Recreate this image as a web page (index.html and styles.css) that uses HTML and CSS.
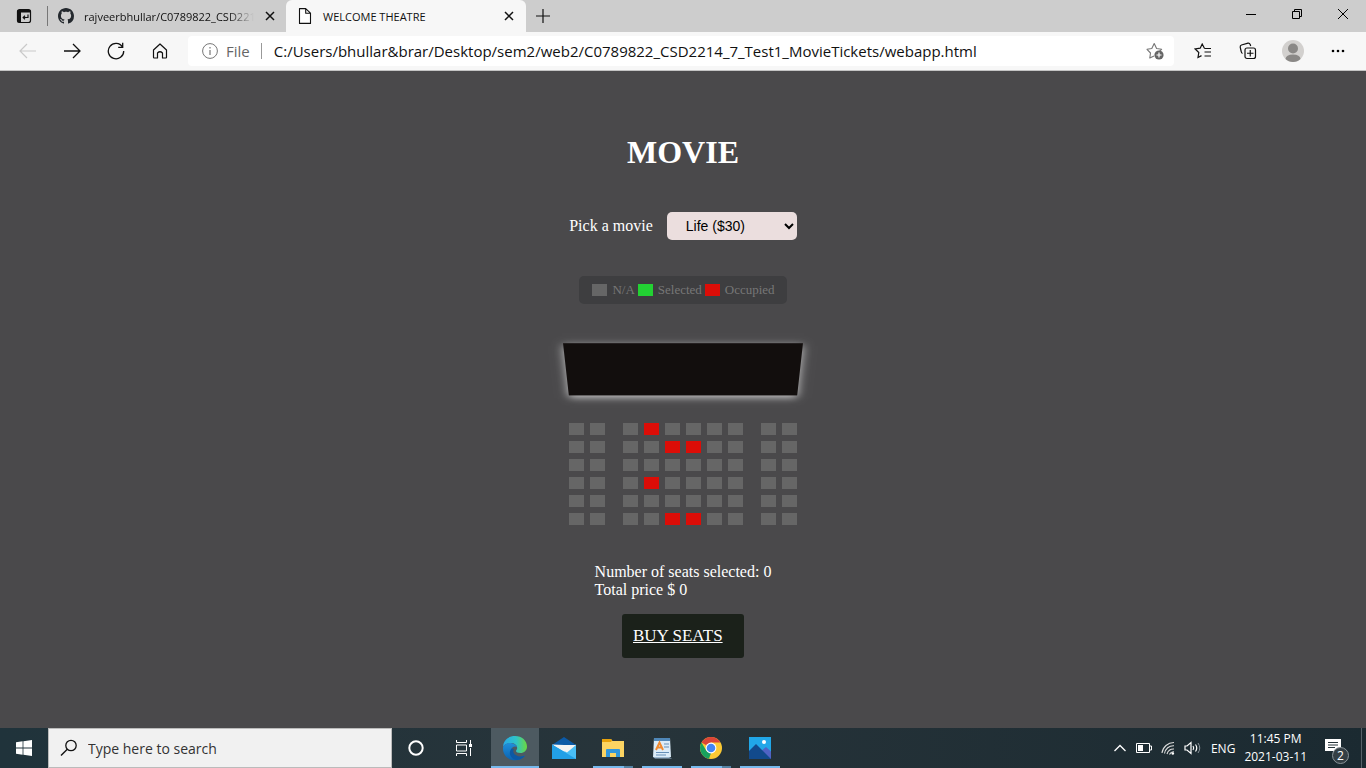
FILE: index.html
```html
<!DOCTYPE html>
<html lang="en">
<head>
<meta charset="utf-8">
<title>WELCOME THEATRE</title>
<link rel="stylesheet" href="styles.css">
</head>
<body>
<header class="browser">
  <div class="tabstrip">
    <button class="tab-menu" aria-label="Tab actions"><svg width="16" height="16" viewBox="0 0 16 16"><rect x="1.500" y="1.500" width="13" height="13" rx="2" fill="none" stroke="#111" stroke-width="1.200"/><path d="M1.500 2h13v2.500h-13zM1.500 2H5v12.500H1.500z" fill="#111"/><path d="M12 6.500v3H7.500M9 7.800 7.200 9.500 9 11.200" fill="none" stroke="#111" stroke-width="1.200"/></svg></button>
    <div class="tab">
      <svg width="16" height="16" viewBox="0 0 16 16"><path fill="#24292e" d="M8 0C3.580 0 0 3.580 0 8c0 3.540 2.290 6.530 5.470 7.590.4.070.55-.17.55-.38 0-.19-.01-.82-.01-1.490-2.010.37-2.530-.49-2.690-.94-.09-.23-.48-.94-.82-1.130-.28-.15-.68-.52-.01-.53.63-.01 1.080.58 1.230.82.72 1.210 1.870.87 2.330.66.070-.52.28-.87.51-1.070-1.780-.2-3.640-.89-3.640-3.950 0-.87.31-1.590.82-2.150-.08-.2-.36-1.020.08-2.120 0 0 .67-.21 2.200.82.64-.18 1.320-.27 2-.27s1.360.09 2 .27c1.530-1.040 2.200-.82 2.200-.82.44 1.100.16 1.920.08 2.120.51.56.82 1.270.82 2.150 0 3.070-1.870 3.750-3.650 3.950.29.25.54.73.54 1.480 0 1.070-.01 1.930-.01 2.200 0 .21.15.46.55.38A8.010 8.010 0 0 0 16 8c0-4.420-3.580-8-8-8z"/></svg>
      <span class="tab-title faded">rajveerbhullar/C0789822_CSD221</span>
      <button class="tab-close" aria-label="Close tab"><svg width="10" height="10" viewBox="0 0 10 10"><path d="M1 1l8 8M9 1 1 9" stroke="#111" stroke-width="1.500"/></svg></button>
    </div>
    <div class="tab active">
      <svg width="16" height="16" viewBox="0 0 16 16"><path d="M2.500.600h6.200l4.800 4.600v10.200h-11zM8.700.600v4.600h4.800" fill="#fff" stroke="#111" stroke-width="1.100" stroke-linejoin="round"/></svg>
      <span class="tab-title">WELCOME THEATRE</span>
      <button class="tab-close" aria-label="Close tab"><svg width="10" height="10" viewBox="0 0 10 10"><path d="M1 1l8 8M9 1 1 9" stroke="#111" stroke-width="1.500"/></svg></button>
    </div>
    <button class="new-tab" aria-label="New tab"><svg width="14" height="14" viewBox="0 0 14 14"><path d="M7 0v14M0 7h14" stroke="#111" stroke-width="1.200"/></svg></button>
    <div class="window-buttons">
      <button aria-label="Minimize"><svg width="10" height="10" viewBox="0 0 10 10"><path d="M0 5.500h10" stroke="#000"/></svg></button>
      <button aria-label="Restore"><svg width="10" height="10" viewBox="0 0 10 10"><path d="M.5 2.500h7v7h-7zM2.500 2.500v-2h7v7h-2" fill="none" stroke="#000"/></svg></button>
      <button aria-label="Close"><svg width="10" height="10" viewBox="0 0 10 10"><path d="M0 0l10 10M10 0 0 10" stroke="#000"/></svg></button>
    </div>
  </div>
  <div class="toolbar">
    <button aria-label="Back"><svg width="18" height="16" viewBox="0 0 18 16"><path d="M17 8H1.500M8 1 1 8l7 7" fill="none" stroke="#c9c9c9" stroke-width="1.200"/></svg></button>
    <button aria-label="Forward"><svg width="18" height="16" viewBox="0 0 18 16"><path d="M1 8h15.500M10 1l7 7-7 7" fill="none" stroke="#111" stroke-width="1.300"/></svg></button>
    <button aria-label="Refresh"><svg width="18" height="18" viewBox="0 0 18 18"><path d="M15.500 5A7.700 7.700 0 1 0 16.700 9M15.700.800V5.300H11.200" fill="none" stroke="#111" stroke-width="1.300"/></svg></button>
    <button aria-label="Home"><svg width="16" height="16" viewBox="0 0 16 16"><path d="M1.500 7 8 1l6.500 6v7.300q0 .7-.7.700H10.500V10Q8 7.500 5.500 10v5H2.200q-.7 0-.7-.7z" fill="none" stroke="#111" stroke-width="1.200" stroke-linejoin="round"/></svg></button>
    <div class="address">
      <svg width="16" height="16" viewBox="0 0 16 16"><circle cx="8" cy="8" r="7.400" fill="none" stroke="#777"/><path d="M8 7v5M8 4v1.500" stroke="#777" stroke-width="1.200"/></svg>
      <span class="scheme">File</span>
      <input class="url" aria-label="Address" value="C:/Users/bhullar&amp;brar/Desktop/sem2/web2/C0789822_CSD2214_7_Test1_MovieTickets/webapp.html">
      <button class="fav" aria-label="Add to favorites"><svg width="18" height="18" viewBox="0 0 18 18"><path d="M8 14 3.800 16l.7-5L1 7.300l4.800-.8L8.200 1.500l2.400 5 5 .8-2.200 2" fill="none" stroke="#777" stroke-width="1.100" stroke-linejoin="round"/><circle cx="13" cy="13" r="4.600" fill="#666"/><path d="M13 10.500v5M10.500 13h5" stroke="#fff" stroke-width="1.200"/></svg></button>
    </div>
    <button aria-label="Favorites"><svg width="18" height="16" viewBox="0 0 18 16"><path d="M7.500 12.600 4 14.500l.8-5L1.200 6l5-.8L8.200 1l2.200 4.200M10.400 5.500H17M10.500 9H17M10.500 13H17" fill="none" stroke="#111" stroke-width="1.200"/></svg></button>
    <button aria-label="Collections"><svg width="18" height="18" viewBox="0 0 18 18"><path d="M3.500 11.500Q2.500 11 2.200 9.500L1.200 5.200Q1 3.500 2.500 3L9 1.200q1.500-.3 2.200 1.300l.5 1.500" fill="none" stroke="#111" stroke-width="1.200"/><rect x="6" y="6" width="10.500" height="10.500" rx="2" fill="#f7f7f7" stroke="#111" stroke-width="1.200"/><path d="M11.250 8v6.500M8 11.250h6.500" stroke="#111" stroke-width="1.200"/></svg></button>
    <button aria-label="Profile"><svg width="22" height="22" viewBox="0 0 22 22"><circle cx="11" cy="11" r="11" fill="#d2d0ce"/><circle cx="11" cy="8.500" r="5" fill="#8a8886"/><path d="M3.500 19Q4 14.500 11 14.500T18.500 19Q15.500 22 11 22T3.500 19z" fill="#8a8886"/></svg></button>
    <button aria-label="Settings and more"><svg width="14" height="4" viewBox="0 0 14 4"><circle cx="2" cy="2" r="1.300"/><circle cx="7" cy="2" r="1.300"/><circle cx="12" cy="2" r="1.300"/></svg></button>
  </div>
</header>

<main class="page">
  <h1>MOVIE</h1>
  <div class="movie-picker">
    <label for="movie">Pick a movie</label>
    <select id="movie"><option>Life ($30)</option></select>
  </div>
  <ul class="legend">
    <li><span class="seat"></span><small>N/A</small></li>
    <li><span class="seat selected"></span><small>Selected</small></li>
    <li><span class="seat occupied"></span><small>Occupied</small></li>
  </ul>
  <div class="theatre">
    <div class="screen"></div>
    <div class="row"><i class="seat"></i><i class="seat"></i><i class="seat"></i><i class="seat occupied"></i><i class="seat"></i><i class="seat"></i><i class="seat"></i><i class="seat"></i><i class="seat"></i><i class="seat"></i></div>
    <div class="row"><i class="seat"></i><i class="seat"></i><i class="seat"></i><i class="seat"></i><i class="seat occupied"></i><i class="seat occupied"></i><i class="seat"></i><i class="seat"></i><i class="seat"></i><i class="seat"></i></div>
    <div class="row"><i class="seat"></i><i class="seat"></i><i class="seat"></i><i class="seat"></i><i class="seat"></i><i class="seat"></i><i class="seat"></i><i class="seat"></i><i class="seat"></i><i class="seat"></i></div>
    <div class="row"><i class="seat"></i><i class="seat"></i><i class="seat"></i><i class="seat occupied"></i><i class="seat"></i><i class="seat"></i><i class="seat"></i><i class="seat"></i><i class="seat"></i><i class="seat"></i></div>
    <div class="row"><i class="seat"></i><i class="seat"></i><i class="seat"></i><i class="seat"></i><i class="seat"></i><i class="seat"></i><i class="seat"></i><i class="seat"></i><i class="seat"></i><i class="seat"></i></div>
    <div class="row"><i class="seat"></i><i class="seat"></i><i class="seat"></i><i class="seat"></i><i class="seat occupied"></i><i class="seat occupied"></i><i class="seat"></i><i class="seat"></i><i class="seat"></i><i class="seat"></i></div>
  </div>
  <p class="summary">Number of seats selected: <span>0</span><br>Total price $ <span>0</span></p>
  <a class="buy" href="#buy">BUY SEATS</a>
</main>

<footer class="taskbar">
  <button class="start" aria-label="Start"><svg width="16" height="16" viewBox="0 0 16 16"><path d="M0 2.200 6.600 1.300v6.300H0zM7.400 1.200 16 0v7.600H7.400zM0 8.400h6.600v6.300L0 13.800zM7.400 8.400H16V16l-8.600-1.200z" fill="#fff"/></svg></button>
  <div class="search">
    <svg width="18" height="18" viewBox="0 0 18 18"><circle cx="11" cy="6.500" r="5.200" fill="none" stroke="#111" stroke-width="1.300"/><path d="M7.300 10.200 1 16.500" stroke="#111" stroke-width="1.400"/></svg>
    <input aria-label="Search" placeholder="Type here to search">
  </div>
  <div class="tools">
    <button aria-label="Cortana"><svg width="16" height="16" viewBox="0 0 16 16"><circle cx="8" cy="8" r="6.700" fill="none" stroke="#fff" stroke-width="2"/></svg></button>
    <button aria-label="Task view"><svg width="16" height="16" viewBox="0 0 16 16"><path d="M.5 0v2.500h10V0M.5 16v-2.500h10V16M.5 5h10v6H.5zM14.500 0v4M14.500 8v8" fill="none" stroke="#fff"/><rect x="13" y="4" width="3" height="3" fill="#fff"/></svg></button>
  </div>
  <div class="apps">
    <button class="current" aria-label="Microsoft Edge"><svg width="26" height="26" viewBox="0 0 26 26"><defs><linearGradient id="edgeTop"><stop stop-color="#28a8e8"/><stop offset=".55" stop-color="#2fc3c8"/><stop offset="1" stop-color="#6bd83e"/></linearGradient><linearGradient id="edgeLow" x2="0" y2="1"><stop stop-color="#2090dc"/><stop offset="1" stop-color="#0a62b0"/></linearGradient></defs><path d="M1 12C1.500 5 6.500 1 13 1c7 0 12 4.800 12 10.500 0 4-3 6.500-6.500 6.500-2.800 0-4.500-1-4.500-2 0-.8 1.200-1.200 1.200-3 0-3-3-5-6.500-5C4.800 8 2 9.700 1 12z" fill="url(#edgeTop)"/><path d="M1 12.500C2.500 8.500 6 7.800 8.700 8c3.300.3 5.800 2 6.400 4.300C13 10.500 9.500 12 9 15.500c-.5 5 5 8.500 10 6.500 1.800-.7 3.300-1.700 4-1.500-2 3-5.700 4.800-10 4.800C6 25.300.600 20 1 12.500z" fill="url(#edgeLow)"/><path d="M9.700 13.500c-2 2-3 6 .3 9.300 1.500 1.400 3 2.200 5 2.300 3.500-.3 6.500-2.300 8-4.600-5 2-10 .5-11.500-3-.5-1.200-.2-2.700.5-3.500z" fill="#0c59a4"/></svg></button>
    <button aria-label="Mail"><svg width="26" height="24" viewBox="0 0 26 24"><path d="M1 9 13 1l12 8v3H1z" fill="#0b5aa7"/><path d="M3 9h20v7H3z" fill="#f2f2f2"/><path d="M1 8.500 17 18l8-9.500V23H1z" fill="#2aa7ea"/><path d="M25 8.500 1 23h24z" fill="#49bdf4"/><path d="M1 8.500 13 9h12l-9 7.500z" fill="#f2f2f2"/><path d="M1 8.500 16 17.500 25 23H1z" fill="#229fe6"/></svg></button>
    <button class="running multi" aria-label="File Explorer"><svg width="24" height="22" viewBox="0 0 24 22"><path d="M1 2h9l1.500 2H23v16H1z" fill="#fcd462"/><path d="M1 2h9l1 1.500-1 1.500H1z" fill="#e8a20c"/><path d="M5 20v-7q0-1 1-1h12q1 0 1 1v7h-4v-4H9v4z" fill="#3297dc"/></svg></button>
    <button class="running" aria-label="WordPad"><svg width="22" height="24" viewBox="0 0 22 24"><path d="M3 2h16l1 19H2z" fill="#dcecf8"/><path d="M3 2h16v3H3z" fill="#4f87b8"/><path d="M5 14 8.500 6.500 12 14M6 11.500h5" fill="none" stroke="#f08a30" stroke-width="2"/><path d="M13 8h5M13 11h5M5 16.500h13M5 19h10" stroke="#668fb7"/><path d="M2 21h16l3 1.500H4z" fill="#9bb6cd"/></svg></button>
    <button class="running multi" aria-label="Google Chrome"><svg width="24" height="24" viewBox="0 0 24 24"><circle cx="12" cy="12" r="11" fill="#fbc934"/><path d="M12 12 2.500 6.500A11 11 0 0 1 21.500 6.500H12z" fill="#db4437"/><path d="M2.500 6.500 7.500 15 12 17l-2 5.800A11 11 0 0 1 2.500 6.500z" fill="#18a05e"/><circle cx="12" cy="12" r="5.400" fill="#fff"/><circle cx="12" cy="12" r="4.300" fill="#4285f4"/></svg></button>
    <button class="running" aria-label="Photos"><svg width="22" height="22" viewBox="0 0 22 22"><path d="M0 0h22v22H0z" fill="#21a7e8"/><path d="M11 15l6-5 5 4.500V22H11z" fill="#5063c4"/><path d="M0 14 7 7l15 15H0z" fill="#124a8c"/><circle cx="15" cy="5" r="2" fill="#fff"/></svg></button>
  </div>
  <div class="tray">
    <svg width="14" height="8" viewBox="0 0 14 8"><path d="M1.500 7 7 1.500 12.500 7" fill="none" stroke="#fff" stroke-width="1.300"/></svg>
    <svg width="16" height="10" viewBox="0 0 16 10"><path d="M.5.500h13v9H.5zM13.500 3h2v4h-2" fill="none" stroke="#fff"/><path d="M2 2h5v6H2z" fill="#fff"/></svg>
    <svg width="14" height="14" viewBox="0 0 14 14"><path d="M1 12A12 12 0 0 1 13 1.500M3.500 12.500A9 9 0 0 1 13 4.700M6 13a7 7 0 0 1 7-5M8.500 13.500A5 5 0 0 1 13 10.700" fill="none" stroke="#ddd" stroke-width="1.100"/><circle cx="11.800" cy="12.500" r="1.300" fill="#fff"/></svg>
    <svg width="18" height="14" viewBox="0 0 18 14"><path d="M1 5h2l4-3.500v11L3 9H1zM9 5q1.500 2 0 4M11.500 3.500q2.500 3.500 0 7" fill="none" stroke="#fff" stroke-width="1.200"/><path d="M14 2q3.500 5 0 10" fill="none" stroke="#89939a"/></svg>
    <span class="lang">ENG</span>
    <time class="clock" datetime="2021-03-11T23:45">11:45 PM<br>2021-03-11</time>
    <button class="notifications" aria-label="Notifications"><svg width="16" height="16" viewBox="0 0 16 16"><path d="M0 0h16v12H10.500L8 15.500V12H0z" fill="#fff"/><path d="M3 3.500h10M3 6h10M3 8.500h7" stroke="#26343a"/></svg><span class="badge">2</span></button>
  </div>
</footer>
</body>
</html>
```
FILE: styles.css
```css
* { box-sizing: border-box; }

body {
  margin: 0;
  min-height: 100vh;
  display: flex;
  flex-direction: column;
  background: #4a494b;
  font-family: "Liberation Serif", "Times New Roman", serif;
  font-size: 16px;
}

button {
  display: flex;
  align-items: center;
  justify-content: center;
  padding: 0;
  border: 0;
  background: none;
}

svg { display: block; flex: none; }

/* Browser frame */
.browser, .taskbar { font-family: "Open Sans", "Noto Sans", sans-serif; }

.tabstrip {
  display: flex;
  height: 32px;
  background: #cdcdcd;
}

.tab-menu {
  width: 48px;
  background: linear-gradient(#777, #777) right / 1px 20px no-repeat;
}

.tab {
  display: flex;
  align-items: center;
  gap: 10px;
  width: 238px;
  padding: 0 10px;
  font-size: 11px;
  color: #111;
}

.tab.active {
  width: 240px;
  padding: 0 11px;
  border-radius: 6px 6px 0 0;
  background: #f7f7f7;
}

.tab-title {
  flex: 1;
  min-width: 0;
  white-space: nowrap;
}

.tab-title.faded { mask-image: linear-gradient(to right, #000 85%, transparent); }

.tab-close { width: 12px; height: 16px; }

.new-tab { width: 34px; }

.window-buttons { display: flex; margin-left: auto; }
.window-buttons button { width: 46px; height: 28px; }

.toolbar {
  display: flex;
  align-items: center;
  height: 39px;
  padding: 0 6px;
  border-bottom: 1px solid #c4c4c4;
  background: #f7f7f7;
}

.toolbar > button { width: 44px; height: 32px; }
.toolbar > .address + button { margin-left: 6px; }
.toolbar > .address ~ button { width: 45px; }

.address {
  display: flex;
  align-items: center;
  flex: 1;
  height: 30px;
  margin-left: 6px;
  padding: 0 10px 0 14px;
  border-radius: 4px;
  background: #fff;
}

.scheme {
  margin-left: 8px;
  padding-right: 11px;
  border-right: 1px solid #999;
  font-size: 15px;
  line-height: 16px;
  color: #666;
}

.url {
  flex: 1;
  min-width: 0;
  padding: 0 0 0 12px;
  border: 0;
  background: none;
  color: #111;
  font: 15px "Open Sans", "Noto Sans", sans-serif;
}

/* Theatre page */
.page {
  flex: 1;
  display: flex;
  flex-direction: column;
  align-items: center;
  justify-content: center;
  padding-bottom: 8px;
  color: #fff;
}

h1 {
  margin: 0 0 42px;
  font-size: 32px;
  line-height: 36px;
}

.movie-picker {
  display: flex;
  align-items: center;
  gap: 14px;
}

.movie-picker select {
  width: 130px;
  height: 28px;
  padding: 5px 15px;
  border: 0;
  border-radius: 5px;
  background: #ebdede;
  color: #000;
  font: 14px "Liberation Sans", Arial, sans-serif;
}

.legend {
  display: flex;
  gap: 3px;
  height: 28px;
  margin: 36px 0 16px;
  padding: 0 12px 0 13px;
  border-radius: 5px;
  background: #3e3e40;
  color: #777;
  list-style: none;
}

.legend li { display: flex; align-items: center; gap: 5px; }
.legend small { font-size: 13px; }

.seat {
  width: 15px;
  height: 12px;
  background: #666;
}
.seat.selected { background: #23d133; }
.seat.occupied { background: #dc0d07; }

.theatre { perspective: 1000px; }

.screen {
  height: 70px;
  margin: 15px 0;
  background: #120e0d;
  box-shadow: 0 3px 10px rgba(255, 255, 255, 0.7);
  transform: rotateX(-45deg);
}

.row { display: flex; }
.row .seat { margin: 3px; }
.row .seat:nth-child(2), .row .seat:nth-child(8) { margin-right: 15px; }

.summary {
  margin: 35px 0 15px;
  line-height: 18px;
}

.buy {
  width: 122px;
  padding: 11px;
  border-radius: 3px;
  background: #1b211a;
  color: #fff;
  font-size: 17px;
  line-height: 22px;
}

/* Taskbar */
.taskbar {
  display: flex;
  height: 40px;
  background: linear-gradient(90deg, #20333b, #27343a 45%, #1b2a31);
  color: #fff;
}

.start { width: 48px; }

.search {
  display: flex;
  align-items: center;
  gap: 10px;
  width: 344px;
  padding: 0 11px;
  border: 1px solid #bbb;
  background: #f1f1f1;
}

.search input {
  flex: 1;
  min-width: 0;
  padding: 0;
  border: 0;
  background: none;
  font: 14px "Open Sans", "Noto Sans", sans-serif;
}
.search input::placeholder { color: #333; }

.tools { display: flex; margin-right: 3px; }
.tools button { width: 48px; }

.apps { display: flex; gap: 1px; }
.apps button { width: 48px; }
.apps .current { background: linear-gradient(#76b9ed, #76b9ed) bottom / 100% 2px no-repeat, #4d5a61; }
.apps .running { background: linear-gradient(#76b9ed, #76b9ed) bottom / 40px 2px no-repeat; }
.apps .multi { background: linear-gradient(90deg, #76b9ed 31px, #5482a3 31px) bottom / 40px 2px no-repeat; }

.tray {
  display: flex;
  align-items: center;
  gap: 9px;
  margin-left: auto;
  padding-right: 4px;
  font-size: 12px;
}

.clock {
  line-height: 18px;
  text-align: center;
}

.notifications {
  position: relative;
  width: 46px;
  height: 40px;
  padding: 0 12px 2px 0;
  border-right: 1px solid #56636a;
}

.badge {
  position: absolute;
  left: 16px;
  top: 19px;
  width: 17px;
  height: 17px;
  border: 1px solid #8a9499;
  border-radius: 50%;
  background: #343f45;
  color: #fff;
  font: 12px/15px "Open Sans", sans-serif;
}
```
